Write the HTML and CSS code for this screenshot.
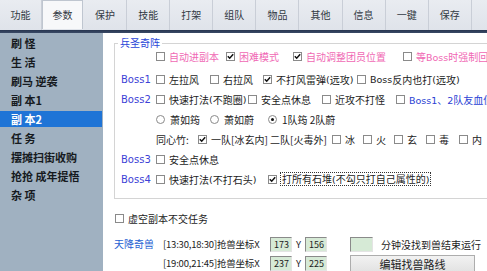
FILE: index.html
```html
<!DOCTYPE html>
<html lang="zh">
<head>
<meta charset="utf-8">
<title>参数</title>
<link rel="stylesheet" href="styles.css">
</head>
<body>
<div class="app">
  <nav class="tabs">
    <div class="tab first">功能</div>
    <div class="tab active">参数</div>
    <div class="tab">保护</div>
    <div class="tab">技能</div>
    <div class="tab">打架</div>
    <div class="tab">组队</div>
    <div class="tab">物品</div>
    <div class="tab">其他</div>
    <div class="tab">信息</div>
    <div class="tab">一键</div>
    <div class="tab">保存</div>
  </nav>
  <div class="rule"></div>
  <div class="main">
    <ul class="sidebar">
      <li>刷 怪</li>
      <li>生 活</li>
      <li>刷马 逆袭</li>
      <li>副 本1</li>
      <li class="sel">副 本2</li>
      <li>任 务</li>
      <li>摆摊扫街收购</li>
      <li>抢抢 成年提悟</li>
      <li>杂 项</li>
    </ul>
    <section class="content">
      <fieldset class="group">
        <legend>兵圣奇阵</legend>
        <div class="row r1">
          <span class="lbl"></span>
          <span class="item w70"><i class="cb"></i><span class="pink">自动进副本</span></span>
          <span class="item w67"><i class="cb on"><svg viewBox="0 0 7 7"><path d="M0.8 3.2 L2.7 5.2 L6.2 1.2"/></svg></i><span class="pink">困难模式</span></span>
          <span class="item w110"><i class="cb on"><svg viewBox="0 0 7 7"><path d="M0.8 3.2 L2.7 5.2 L6.2 1.2"/></svg></i><span class="pink">自动调整团员位置</span></span>
          <span class="item"><i class="cb"></i><span class="pink">等<span class="lat">Boss</span>时强制回城等待</span></span>
        </div>
        <div class="row">
          <span class="lbl">Boss1</span>
          <span class="item w54"><i class="cb"></i>左拉风</span>
          <span class="item w53"><i class="cb"></i>右拉风</span>
          <span class="item w94"><i class="cb on"><svg viewBox="0 0 7 7"><path d="M0.8 3.2 L2.7 5.2 L6.2 1.2"/></svg></i>不打风雷弹<span class="lat">(</span>远攻<span class="lat">)</span></span>
          <span class="item"><i class="cb"></i><span class="lat">Boss</span>反内也打<span class="lat">(</span>远攻<span class="lat">)</span></span>
        </div>
        <div class="row">
          <span class="lbl">Boss2</span>
          <span class="item w92"><i class="cb"></i>快速打法<span class="lat">(</span>不跑圈<span class="lat">)</span></span>
          <span class="item w74"><i class="cb"></i>安全点休息</span>
          <span class="item w74"><i class="cb"></i>近攻不打怪</span>
          <span class="item"><i class="cb"></i><span class="blue"><span class="lat">Boss1</span>、<span class="lat">2</span>队友血低时回城</span></span>
        </div>
        <div class="row">
          <span class="lbl"></span>
          <span class="item w54"><i class="rb"></i>萧如筠</span>
          <span class="item w58"><i class="rb on"></i>萧如蔚</span>
          <span class="item"><i class="rb sel"></i>1队筠 2队蔚</span>
        </div>
        <div class="row">
          <span class="lbl"></span>
          <span class="item w42">同心竹:</span>
          <span class="item w134"><i class="cb on"><svg viewBox="0 0 7 7"><path d="M0.8 3.2 L2.7 5.2 L6.2 1.2"/></svg></i>一队[冰玄内] 二队[火毒外]</span>
          <span class="item w31"><i class="cb"></i>冰</span>
          <span class="item w31"><i class="cb"></i>火</span>
          <span class="item w32"><i class="cb"></i>玄</span>
          <span class="item w33"><i class="cb"></i>毒</span>
          <span class="item"><i class="cb"></i>内</span>
        </div>
        <div class="row">
          <span class="lbl">Boss3</span>
          <span class="item"><i class="cb"></i>安全点休息</span>
        </div>
        <div class="row">
          <span class="lbl">Boss4</span>
          <span class="item w112"><i class="cb"></i>快速打法<span class="lat">(</span>不打石头<span class="lat">)</span></span>
          <span class="item"><i class="cb on"><svg viewBox="0 0 7 7"><path d="M0.8 3.2 L2.7 5.2 L6.2 1.2"/></svg></i><span class="focus">打所有石堆<span class="lat">(</span>不勾只打自己属性的<span class="lat">)</span></span></span>
        </div>
      </fieldset>

      <div class="opt"><i class="cb"></i>虚空副本不交任务</div>

      <div class="beast">
        <div class="beast-title">天降奇兽</div>
        <div class="beast-rows">
          <div class="brow">
            <span class="time">[13:30,18:30]抢兽坐标X</span>
            <span class="num">173</span>
            <span class="y">Y</span>
            <span class="num">156</span>
            <span class="num wide"></span>
            <span class="note">分钟没找到兽结束运行</span>
          </div>
          <div class="brow">
            <span class="time">[19:00,21:45]抢兽坐标X</span>
            <span class="num">237</span>
            <span class="y">Y</span>
            <span class="num">225</span>
            <button class="btn">编辑找兽路线</button>
          </div>
        </div>
      </div>
    </section>
  </div>
</div>
</body>
</html>
```

FILE: styles.css
```css
html, body {
  margin: 0;
  padding: 0;
  width: 487px;
  height: 271px;
  overflow: hidden;
  background: #ffffff;
}

.app {
  width: 487px;
  height: 271px;
  display: flex;
  flex-direction: column;
  font-family: "Noto Sans CJK SC", "Noto Sans", sans-serif;
  color: #1c1c1c;
}

/* ---------- tabs ---------- */
.tabs {
  display: flex;
  height: 30px;
  background: linear-gradient(#e9ecf1, #dfe3ea);
  flex: none;
}

.tab {
  flex: 0 0 43.1px;
  box-sizing: border-box;
  height: 30px;
  line-height: 30px;
  text-align: center;
  font-size: 10px;
  color: #333a44;
  border-right: 1px solid #c9ced7;
}

.tab.first {
  flex-basis: 42px;
}

.tab.active {
  flex-basis: 41px;
  background: #f7f8fa;
  border: 1px solid #bfc6d0;
  border-bottom: none;
  margin: 0 1px 1px 0;
  height: 29px;
  line-height: 28px;
}

.rule {
  height: 3px;
  background: linear-gradient(#273550, #3a4a66);
  flex: none;
}

/* ---------- main ---------- */
.main {
  flex: 1;
  display: flex;
  min-height: 0;
}

.sidebar {
  list-style: none;
  margin: 0;
  padding: 2px 0 0 0;
  width: 103px;
  flex: none;
  background: #a0b1c1;
}

.sidebar li {
  height: 16px;
  line-height: 16px;
  margin-bottom: 3px;
  padding-left: 11px;
  font-size: 11px;
  font-weight: bold;
  color: #161a20;
  white-space: nowrap;
}

.sidebar li.sel {
  background: #1f74d6;
  color: #ffffff;
  margin-right: 1px;
}

.content {
  flex: 1;
  min-width: 0;
  overflow: hidden;
  padding: 5px 0 0 11px;
  background: #ffffff;
  font-size: 10px;
}

/* ---------- group box ---------- */
.group {
  margin: 0;
  padding: 0 0 9px 6px;
  border: 1px solid #d4d4d4;
  width: 430px;
  box-sizing: border-box;
  min-inline-size: 0;
}

.group legend {
  font-size: 10px;
  line-height: 10px;
  padding: 0 2px;
  margin: 7px 0 0 -3px;
  color: #2a45d8;
}

.row {
  display: flex;
  align-items: center;
  height: 20px;
  white-space: nowrap;
}

.row.r1 {
  height: 16px;
  margin-bottom: 5px;
}

.lbl {
  flex: 0 0 35px;
  font-family: "DejaVu Sans", sans-serif;
  font-size: 10px;
  color: #3d42d6;
}

.item {
  display: flex;
  align-items: center;
  flex: none;
  white-space: nowrap;
}

.w31 { width: 31px; }
.w32 { width: 32px; }
.w33 { width: 33px; }
.w42 { width: 42px; }
.w53 { width: 53px; }
.w54 { width: 54px; }
.w58 { width: 58px; }
.w67 { width: 67px; }
.w70 { width: 70px; }
.w74 { width: 74px; }
.w92 { width: 92px; }
.w94 { width: 94px; }
.w110 { width: 110px; }
.w112 { width: 112px; }
.w134 { width: 134px; }

.lat {
  font-family: "DejaVu Sans", sans-serif;
  font-size: 9.5px;
}

.pink {
  color: #f068b4;
}

.blue {
  color: #2b3fd4;
}

/* checkbox */
.cb {
  display: inline-block;
  box-sizing: border-box;
  width: 9px;
  height: 9px;
  border: 1px solid #8a8a8a;
  background: #ffffff;
  margin-right: 4px;
  flex: none;
  position: relative;
}

.cb svg {
  display: block;
  width: 7px;
  height: 7px;
}

.cb svg path {
  fill: none;
  stroke: #111111;
  stroke-width: 1.5;
}

/* radio */
.rb {
  display: inline-block;
  box-sizing: border-box;
  width: 9px;
  height: 9px;
  border: 1px solid #8a8a8a;
  border-radius: 50%;
  background: #ffffff;
  margin-right: 5px;
  flex: none;
  position: relative;
}

.rb.sel::after {
  content: "";
  position: absolute;
  left: 2px;
  top: 2px;
  width: 3px;
  height: 3px;
  border-radius: 50%;
  background: #111111;
}

.focus {
  outline: 1px dotted #333333;
  outline-offset: 0;
  padding: 0 1px;
  line-height: 11px;
}

/* ---------- lower options ---------- */
.opt {
  display: flex;
  align-items: center;
  height: 20px;
  margin-top: 9px;
  padding-left: 1px;
  white-space: nowrap;
}

.opt .cb {
  margin-right: 4px;
}

.beast {
  display: flex;
  margin-top: 8px;
  white-space: nowrap;
}

.beast-title {
  width: 49px;
  flex: none;
  line-height: 16px;
  color: #1f5fd2;
}

.beast-rows {
  display: flex;
  flex-direction: column;
  gap: 3px;
}

.brow {
  display: flex;
  align-items: center;
  height: 16px;
}

.time {
  width: 107px;
  flex: none;
  font-size: 9.5px;
  letter-spacing: -0.2px;
}

.num {
  box-sizing: border-box;
  width: 22px;
  height: 15px;
  flex: none;
  background: #d6ead6;
  border-top: 1px solid #8a8a8a;
  border-left: 1px solid #8a8a8a;
  border-right: 1px solid #e4e4e4;
  border-bottom: 1px solid #e4e4e4;
  font-size: 9px;
  line-height: 13px;
  text-align: right;
  padding-right: 2px;
}

.num.wide {
  width: 23px;
  margin-left: 23px;
}

.y {
  width: 13px;
  flex: none;
  text-align: center;
  font-size: 9.5px;
}

.note {
  margin-left: 8px;
}

.btn {
  margin: 0 0 0 23px;
  width: 125px;
  height: 18px;
  flex: none;
  box-sizing: border-box;
  border: 1px solid #adadad;
  background: linear-gradient(#f2f2f2, #e2e2e2);
  font-family: "Noto Sans CJK SC", sans-serif;
  font-size: 11px;
  color: #222222;
  padding: 0;
  line-height: 16px;
  align-self: flex-start;
}
```
